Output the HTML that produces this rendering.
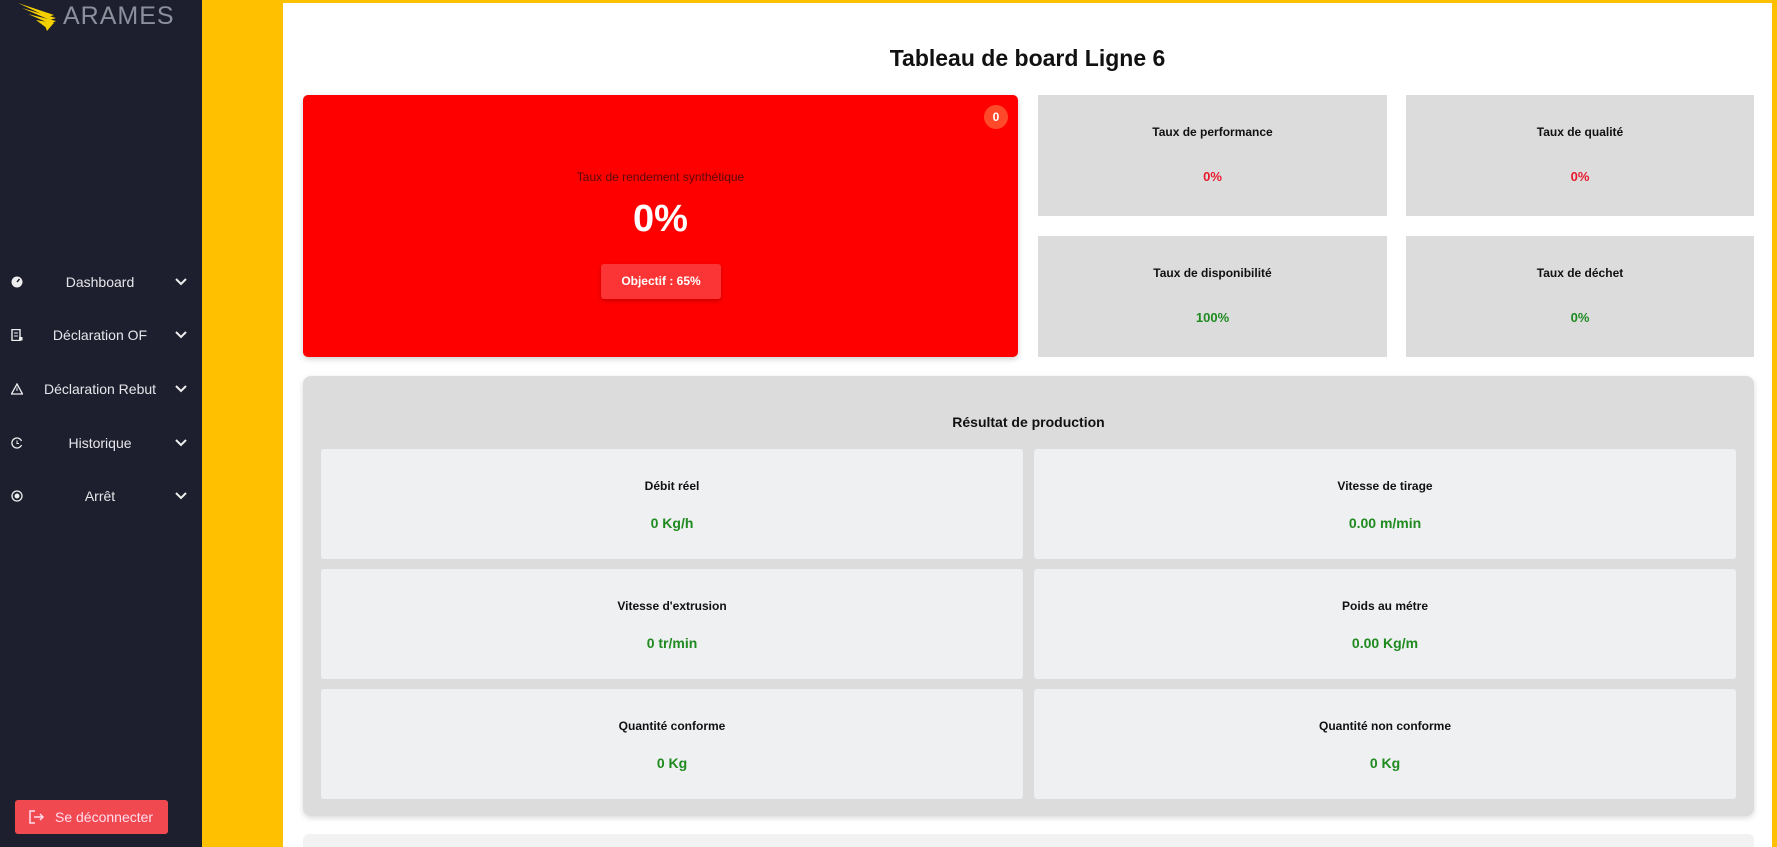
<!DOCTYPE html>
<html><head><meta charset="utf-8"><style>
*{box-sizing:border-box;margin:0;padding:0}
html,body{width:1777px;height:847px;overflow:hidden}
body{background:#ffc000;font-family:"Liberation Sans",sans-serif;position:relative}
.sb{position:absolute;left:0;top:0;width:202px;height:847px;background:#1e1f2e}
.logo{position:absolute;left:63px;top:2px;font-size:25px;color:#8b909c;letter-spacing:1px}
.item{position:absolute;left:0;width:202px;height:24px;color:#e6e6ea;font-size:14px}
.item .ic{position:absolute;left:11px;top:5px;width:12px;height:12px}
.item .t{position:absolute;left:30px;width:140px;text-align:center;top:3px}
.item .ch{position:absolute;left:174px;top:4px;width:14px;height:14px}
.logout{position:absolute;left:15px;top:800px;width:153px;height:34px;background:#f04a50;border-radius:3px;color:#fde;font-size:14px;line-height:34px;padding-left:40px}
.main{position:absolute;left:283px;top:3px;width:1489px;height:844px;background:#fff}
h1{position:absolute;left:283px;width:1489px;top:45px;text-align:center;font-size:23px;font-weight:bold;color:#111}
.red{position:absolute;left:303px;top:95px;width:715px;height:262px;background:#fe0000;border-radius:5px;box-shadow:0 2px 6px rgba(0,0,0,.2);text-align:center;color:#fff}
.badge{position:absolute;left:984px;top:105px;width:24px;height:24px;border-radius:50%;background:#ff4a2a;color:#fff;font-size:12px;font-weight:bold;text-align:center;line-height:24px}
.card{position:absolute;background:#dcdcdc;text-align:center}
.card .l{position:absolute;width:100%;top:30px;font-size:12px;font-weight:bold;color:#111}
.card .v{position:absolute;width:100%;top:74px;font-size:13px;font-weight:bold}
.panel{position:absolute;left:303px;top:376px;width:1451px;height:440px;background:#dcdcdc;border-radius:8px;box-shadow:0 2px 6px rgba(0,0,0,.15)}
.in{position:absolute;background:#eef0f1;border-radius:3px;text-align:center}
.in .l{position:absolute;width:100%;top:30px;font-size:12px;font-weight:bold;color:#111}
.in .v{position:absolute;width:100%;top:66px;font-size:14px;font-weight:bold;color:#1f8a1f}
.r{color:#e8192c}.g{color:#1f8a1f}
</style></head><body>
<div class="sb">
<svg style="position:absolute;left:18px;top:3px" width="42" height="28" viewBox="0 0 42 28"><g fill="#f5d000"><path d="M0 0 L36 12 L30 14 Z"/><path d="M4 5 L38 15 L32 17Z"/><path d="M10 11 L38 18 L33 21Z"/><path d="M18 17 L36 20 L30 26Z"/><path d="M26 20 L34 22 L29 28Z"/></g></svg>
<div class="logo">ARAMES</div>
<div class="item" style="top:271px"><svg class="ic" viewBox="0 0 12 12"><circle cx="6" cy="6" r="5.5" fill="#eee"/><path d="M6 6 L8.5 3" stroke="#1e1f2e" stroke-width="1.5"/></svg><span class="t">Dashboard</span><svg class="ch" viewBox="0 0 14 14"><path d="M2 4 L7 9 L12 4" stroke="#eee" stroke-width="2" fill="none"/></svg></div>
<div class="item" style="top:324px"><svg class="ic" viewBox="0 0 12 12"><rect x="1" y="0.5" width="8" height="11" fill="none" stroke="#eee" stroke-width="1.4"/><path d="M3 4h4M3 7h4" stroke="#eee"/><rect x="8" y="8" width="3.5" height="3.5" fill="#eee"/></svg><span class="t">Déclaration OF</span><svg class="ch" viewBox="0 0 14 14"><path d="M2 4 L7 9 L12 4" stroke="#eee" stroke-width="2" fill="none"/></svg></div>
<div class="item" style="top:378px"><svg class="ic" viewBox="0 0 12 12"><path d="M6 1 L11.5 11 H0.5Z" fill="none" stroke="#eee" stroke-width="1.3"/><path d="M6 4.5v3.5" stroke="#eee"/></svg><span class="t">Déclaration Rebut</span><svg class="ch" viewBox="0 0 14 14"><path d="M2 4 L7 9 L12 4" stroke="#eee" stroke-width="2" fill="none"/></svg></div>
<div class="item" style="top:432px"><svg class="ic" viewBox="0 0 12 12"><path d="M10.5 4 A5 5 0 1 0 10.5 8" fill="none" stroke="#eee" stroke-width="1.3"/><path d="M6 3.5v3h2" stroke="#eee" fill="none"/></svg><span class="t">Historique</span><svg class="ch" viewBox="0 0 14 14"><path d="M2 4 L7 9 L12 4" stroke="#eee" stroke-width="2" fill="none"/></svg></div>
<div class="item" style="top:485px"><svg class="ic" viewBox="0 0 12 12"><circle cx="6" cy="6" r="5" fill="none" stroke="#eee" stroke-width="1.3"/><circle cx="6" cy="6" r="2.5" fill="#eee"/></svg><span class="t">Arrêt</span><svg class="ch" viewBox="0 0 14 14"><path d="M2 4 L7 9 L12 4" stroke="#eee" stroke-width="2" fill="none"/></svg></div>
<div class="logout"><svg style="position:absolute;left:13px;top:9px" width="16" height="16" viewBox="0 0 16 16"><path d="M7 2H2v12h5M6 8h9M12 5l3 3-3 3" stroke="#fde" stroke-width="1.5" fill="none"/></svg>Se déconnecter</div>
</div>
<div class="main"></div>
<h1>Tableau de board Ligne 6</h1>
<div class="red">
<div style="position:absolute;width:100%;top:75px;font-size:12px;color:#5a0a0a">Taux de rendement synthétique</div>
<div style="position:absolute;width:100%;top:103px;font-size:38px;font-weight:bold">0%</div>
<div style="position:absolute;left:298px;top:169px;width:120px;height:35px;background:#fb3535;border-radius:3px;box-shadow:0 2px 5px rgba(0,0,0,.2);font-size:12px;font-weight:bold;line-height:35px">Objectif : 65%</div>
</div>
<div class="badge">0</div>
<div class="card" style="left:1038px;top:95px;width:349px;height:121px"><div class="l">Taux de performance</div><div class="v r">0%</div></div>
<div class="card" style="left:1406px;top:95px;width:348px;height:121px"><div class="l">Taux de qualité</div><div class="v r">0%</div></div>
<div class="card" style="left:1038px;top:236px;width:349px;height:121px"><div class="l">Taux de disponibilité</div><div class="v g">100%</div></div>
<div class="card" style="left:1406px;top:236px;width:348px;height:121px"><div class="l">Taux de déchet</div><div class="v g">0%</div></div>
<div class="panel">
<div style="position:absolute;width:100%;top:38px;text-align:center;font-size:14px;font-weight:bold;color:#111">Résultat de production</div>
<div class="in" style="left:18px;top:73px;width:702px;height:110px"><div class="l">Débit réel</div><div class="v">0 Kg/h</div></div>
<div class="in" style="left:731px;top:73px;width:702px;height:110px"><div class="l">Vitesse de tirage</div><div class="v">0.00 m/min</div></div>
<div class="in" style="left:18px;top:193px;width:702px;height:110px"><div class="l">Vitesse d'extrusion</div><div class="v">0 tr/min</div></div>
<div class="in" style="left:731px;top:193px;width:702px;height:110px"><div class="l">Poids au métre</div><div class="v">0.00 Kg/m</div></div>
<div class="in" style="left:18px;top:313px;width:702px;height:110px"><div class="l">Quantité conforme</div><div class="v">0 Kg</div></div>
<div class="in" style="left:731px;top:313px;width:702px;height:110px"><div class="l">Quantité non conforme</div><div class="v">0 Kg</div></div>
</div>
<div style="position:absolute;left:303px;top:834px;width:1451px;height:13px;background:#f2f2f2;border-radius:6px 6px 0 0"></div>
</body></html>
